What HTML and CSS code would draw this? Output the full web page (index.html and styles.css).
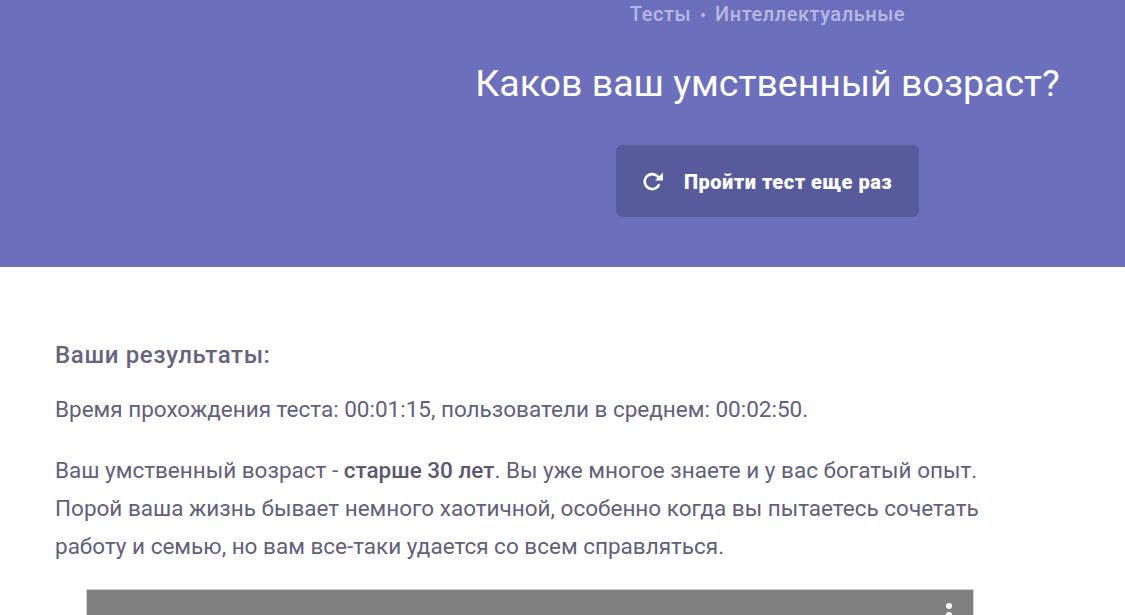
FILE: index.html
```html
<!DOCTYPE html>
<html lang="ru">
<head>
<meta charset="UTF-8">
<meta name="viewport" content="width=device-width, initial-scale=1.0">
<title>Каков ваш умственный возраст?</title>
<link rel="stylesheet" href="styles.css">
</head>
<body>
    <header class="hero">
        <div class="hero-side"></div>
        <div class="hero-main">
            <div class="crumbs">Тесты<span class="crumbs-dot"></span>Интеллектуальные</div>
            <h1 class="title">Каков ваш умственный возраст?</h1>
            <a class="retry" href="#">
                <svg class="retry-icon" viewBox="0 0 22 22" width="22" height="22" aria-hidden="true">
                    <path d="M17.2 14.2A7.5 7.5 0 1 1 15.6 6.4L18 8.8" fill="none" stroke="#fff" stroke-width="2.6"/>
                    <path d="M21 2.5V10.5H13Z" fill="#fff"/>
                </svg>
                <span class="retry-label">Пройти тест еще раз</span>
            </a>
        </div>
    </header>

    <main class="result">
        <h2 class="result-title">Ваши результаты:</h2>
        <p class="result-time">Время прохождения теста: 00:01:15, пользователи в среднем: 00:02:50.</p>
        <p class="result-text">Ваш умственный возраст - <b>старше 30 лет</b>. Вы уже многое знаете и у вас богатый опыт. Порой ваша жизнь бывает немного хаотичной, особенно когда вы пытаетесь сочетать работу и семью, но вам все-таки удается со всем справляться.</p>
        <div class="video">
            <div class="video-menu"><i></i><i></i><i></i></div>
        </div>
    </main>
</body>
</html>
```

FILE: styles.css
```css
html, body {
    height: 100%;
    overflow: hidden;
}
body {
    margin: 0;
    font-family: Roboto, sans-serif;
    background-color: #fff;
    color: #62607a;
}

/* Header */
.hero {
    display: flex;
    height: 267px;
    background-color: #6c6fbb;
}
.hero-side {
    width: 410px;
    flex-shrink: 0;
}
.hero-main {
    flex: 1;
    display: flex;
    flex-direction: column;
    align-items: center;
}
.crumbs {
    display: flex;
    align-items: center;
    height: 28px;
    font-size: 20px;
    font-weight: 500;
    letter-spacing: 0.55px;
    color: #b6b8e2;
}
.crumbs-dot {
    width: 4px;
    height: 4px;
    margin: 2px 10px 0;
    border-radius: 50%;
    background-color: #b6b8e2;
}
.title {
    margin: 31px 0 0;
    font-size: 37.5px;
    line-height: 48px;
    font-weight: 400;
    color: #fff;
}
.retry {
    display: flex;
    align-items: center;
    gap: 20px;
    box-sizing: border-box;
    width: 303px;
    height: 72px;
    margin-top: 38px;
    padding-left: 26px;
    border-radius: 6px;
    background-color: #585b9b;
    color: #fff;
    font-family: Roboto, sans-serif;
    font-size: 20px;
    font-weight: 900;
    letter-spacing: 0.5px;
    text-decoration: none;
}
.retry-icon {
    flex-shrink: 0;
}
.retry-label {
    padding-top: 2px;
}

/* Results */
.result {
    padding: 71px 55px 0;
}
.result-title {
    margin: 0;
    font-size: 24px;
    line-height: 34px;
    font-weight: 500;
    letter-spacing: 0.65px;
    color: #66647e;
}
.result-time {
    margin: 18px 0 0;
    font-size: 22.5px;
    line-height: 38px;
}
.result-text {
    margin: 23px 0 0;
    max-width: 960px;
    font-size: 22.5px;
    line-height: 38px;
}
.result-text b {
    font-weight: 500;
    color: #5a5870;
}
.video {
    display: flex;
    justify-content: flex-end;
    box-sizing: border-box;
    width: 888px;
    height: 300px;
    margin: 24px 0 0 31px;
    padding: 13px 21px 0 0;
    border: 1px solid #d4d4d4;
    background-color: #808080;
}
.video-menu i {
    display: block;
    width: 6px;
    height: 6px;
    margin-bottom: 3px;
    border-radius: 50%;
    background-color: #fff;
}
```
